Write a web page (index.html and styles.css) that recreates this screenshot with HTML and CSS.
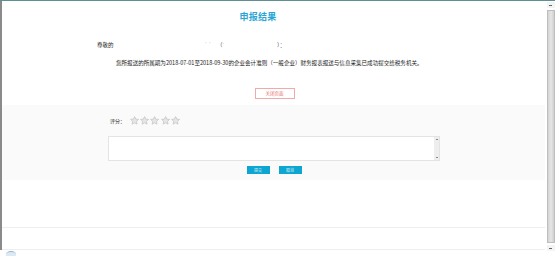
FILE: index.html
```html
<!DOCTYPE html>
<html lang="zh-CN">
<head>
<meta charset="utf-8">
<title>申报结果</title>
<link rel="stylesheet" href="styles.css">
</head>
<body>
<div class="frame">
  <div class="main">
    <h1 class="title">申报结果</h1>
    <div class="greet">
      <span class="greet-name">尊敬的</span>
      <span class="faint faint-a">'</span><span class="faint faint-b">'</span>
      <span class="paren-open">（<span class="faint">'</span></span>
      <span class="paren-close">）：</span>
    </div>
    <p class="msg">您所报送的所属期为2018-07-01至2018-09-30的企业会计准则（一般企业）财务报表报送与信息采集已成功提交给税务机关。</p>
    <div class="close-row"><button class="btn-close">关闭页面</button></div>
    <section class="rate">
      <div class="score">
        <span class="score-label">评分：</span>
        <span class="stars">
          <svg class="star" viewBox="0 0 10 10"><path d="M5 0.6 L6.3 3.4 L9.4 3.7 L7.1 5.8 L7.7 8.9 L5 7.4 L2.3 8.9 L2.9 5.8 L0.6 3.7 L3.7 3.4 Z"/></svg>
          <svg class="star" viewBox="0 0 10 10"><path d="M5 0.6 L6.3 3.4 L9.4 3.7 L7.1 5.8 L7.7 8.9 L5 7.4 L2.3 8.9 L2.9 5.8 L0.6 3.7 L3.7 3.4 Z"/></svg>
          <svg class="star" viewBox="0 0 10 10"><path d="M5 0.6 L6.3 3.4 L9.4 3.7 L7.1 5.8 L7.7 8.9 L5 7.4 L2.3 8.9 L2.9 5.8 L0.6 3.7 L3.7 3.4 Z"/></svg>
          <svg class="star" viewBox="0 0 10 10"><path d="M5 0.6 L6.3 3.4 L9.4 3.7 L7.1 5.8 L7.7 8.9 L5 7.4 L2.3 8.9 L2.9 5.8 L0.6 3.7 L3.7 3.4 Z"/></svg>
          <svg class="star" viewBox="0 0 10 10"><path d="M5 0.6 L6.3 3.4 L9.4 3.7 L7.1 5.8 L7.7 8.9 L5 7.4 L2.3 8.9 L2.9 5.8 L0.6 3.7 L3.7 3.4 Z"/></svg>
        </span>
      </div>
      <div class="ta">
        <div class="ta-body"></div>
        <div class="ta-scroll"><span class="ta-arrow"></span><span class="ta-arrow"></span></div>
      </div>
      <div class="actions">
        <button class="btn-blue">提交</button>
        <button class="btn-blue">取消</button>
      </div>
    </section>
    <div class="spacer"></div>
    <div class="footer"></div>
    <div class="bottom"><span class="arc"></span></div>
  </div>
  <div class="scrollbar">
    <span class="sb-btn"><span class="sb-glyph"></span></span>
    <span class="sb-thumb"></span>
    <span class="sb-btn"><span class="sb-glyph"></span></span>
  </div>
</div>
</body>
</html>
```
FILE: styles.css
```css
* { box-sizing: border-box; }
html, body { margin: 0; padding: 0; background: #fff; }
body {
  width: 555px;
  height: 256px;
  overflow: hidden;
  font-family: "Noto Sans CJK SC", "Noto Sans", sans-serif;
  color: #333;
}
.frame {
  display: flex;
  width: 555px;
  height: 256px;
  border-top: 1px solid #5f8f92;
}
.main {
  flex: 1;
  display: flex;
  flex-direction: column;
  border-left: 2px solid #8a8a8a;
  height: 252px;
}
.title {
  margin: 10px 0 0 0;
  padding-right: 31px;
  text-align: center;
  font-size: 9px;
  line-height: 12px;
  font-weight: 700;
  color: #2aa6d6;
  letter-spacing: 0.2px;
}
.greet {
  margin-top: 18px;
  display: flex;
  align-items: center;
  height: 8px;
  font-size: 5.5px;
  line-height: 8px;
  padding-left: 95px;
  color: #222;
}
.greet-name { width: 108px; }
.faint { color: #c8c8c8; }
.faint-a { width: 4px; }
.faint-b { width: 8px; }
.paren-open { width: 60px; color: #444; }
.paren-close { color: #444; }
.msg {
  margin: 10px 0 0 0;
  padding-left: 114px;
  font-size: 5.55px;
  line-height: 8px;
  color: #222;
  white-space: nowrap;
}
.close-row {
  margin-top: 21px;
  display: flex;
  justify-content: center;
  padding-left: 2px;
}
.btn-close {
  width: 40px;
  height: 11px;
  padding: 0;
  border: 1px solid #f2aaa8;
  background: #fff;
  color: #e8706c;
  font-family: inherit;
  font-size: 4.5px;
  line-height: 9px;
}
.rate {
  margin-top: 6px;
  background: #fafafa;
  padding: 11px 0 6px 0;
  display: flex;
  flex-direction: column;
  align-items: flex-start;
}
.score {
  display: flex;
  align-items: center;
  height: 10px;
  padding-left: 108px;
}
.score-label {
  width: 20px;
  font-size: 5px;
  line-height: 10px;
  color: #222;
}
.stars { display: flex; gap: 1px; }
.star { width: 9.2px; height: 9.2px; display: block; }
.star path { fill: #e6e6e6; stroke: #bdbdbd; stroke-width: 0.7; stroke-linejoin: round; }
.ta {
  margin: 10px 0 0 106px;
  width: 332px;
  height: 25px;
  display: flex;
  border: 1px solid #e4e4e4;
  background: #fff;
}
.ta-body { flex: 1; }
.ta-scroll {
  width: 5px;
  background: #eeeeee;
  display: flex;
  flex-direction: column;
  justify-content: space-between;
  align-items: center;
  padding: 2px 0;
}
.ta-arrow { width: 2px; height: 1px; background: #888; }
.actions {
  align-self: center;
  margin-top: 5px;
  display: flex;
  gap: 9px;
  padding-left: 1px;
}
.btn-blue {
  width: 23px;
  height: 8px;
  padding: 0;
  border: 0;
  background: #0ea5d1;
  color: #d8f1f9;
  font-family: inherit;
  font-size: 4px;
  line-height: 8px;
}
.spacer { flex: 1; }
.footer {
  height: 23px;
  border-top: 1px solid #eeeeee;
  border-bottom: 1px solid #eeeeee;
}
.bottom { height: 3px; position: relative; margin-left: -2px; background: #fff; }
.arc {
  position: absolute;
  left: 6px;
  top: 1px;
  width: 10px;
  height: 6px;
  border-radius: 50% 50% 0 0;
  border-top: 1px solid #8fb6d4;
  background: #dce9f3;
}
.scrollbar {
  width: 10px;
  display: flex;
  flex-direction: column;
  align-items: center;
  padding: 1px 0 5px 1px;
  background: #fff;
  gap: 2px;
}
.sb-btn {
  width: 8px;
  height: 6px;
  display: flex;
  align-items: center;
  justify-content: center;
  background: #f4f4f4;
}
.sb-glyph { width: 3px; height: 1px; background: #666; }
.sb-thumb {
  flex: 1;
  width: 8px;
  border: 1px solid #bdbdbd;
  background: linear-gradient(to right, #d3d3d3, #e6e6e6 50%, #cfcfcf);
}
```
